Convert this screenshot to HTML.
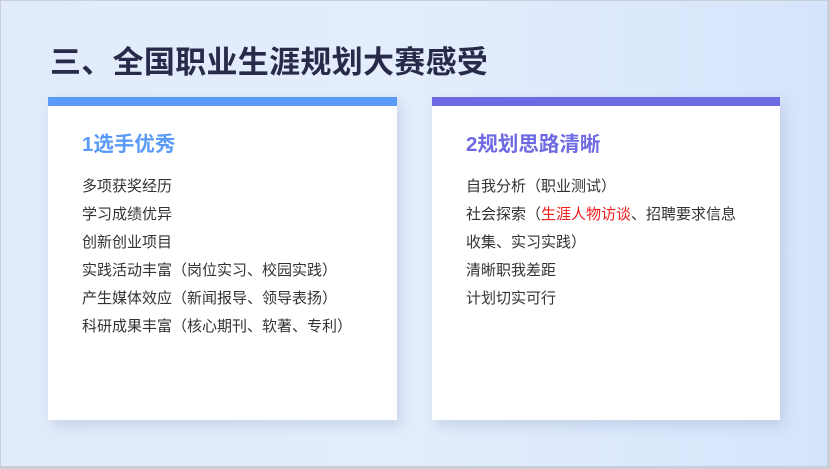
<!DOCTYPE html>
<html><head><meta charset="utf-8"><style>
html,body{margin:0;padding:0;width:830px;height:469px;overflow:hidden;background:#c9ced8;}
.s{position:absolute;left:1px;top:1px;width:826px;height:465px;background:linear-gradient(90deg,#e2ebfb 0%,#e3edfc 50%,#d6e4fb 100%);font-family:"Liberation Sans","Noto Sans CJK SC",sans-serif;}
h1{position:absolute;left:49px;top:40px;margin:0;font-size:31px;line-height:44px;font-weight:bold;color:#272a48;letter-spacing:0.3px;}
.c{position:absolute;top:96px;height:323px;background:#fff;box-shadow:4px 6px 12px rgba(120,140,180,0.25);}
.c .bar{height:9px;}
.c h2{position:absolute;left:34px;top:34px;margin:0;font-size:20.5px;line-height:28px;font-weight:bold;}
.c .l{position:absolute;left:34px;top:76px;font-size:15px;line-height:28px;color:#333;}
</style></head><body><div class="s">
<h1>三、全国职业生涯规划大赛感受</h1>
<div class="c" style="left:47px;width:349px"><div class="bar" style="background:#5a9af8"></div>
<h2 style="color:#5a9af8">1选手优秀</h2>
<div class="l">多项获奖经历<br>学习成绩优异<br>创新创业项目<br>实践活动丰富（岗位实习、校园实践）<br>产生媒体效应（新闻报导、领导表扬）<br>科研成果丰富（核心期刊、软著、专利）</div></div>
<div class="c" style="left:431px;width:348px"><div class="bar" style="background:#6e6ae2"></div>
<h2 style="color:#6e6ae2">2规划思路清晰</h2>
<div class="l">自我分析（职业测试）<br>社会探索（<span style="color:#f01c1c">生涯人物访谈</span>、招聘要求信息<br>收集、实习实践）<br>清晰职我差距<br>计划切实可行</div></div>
</div></body></html>
